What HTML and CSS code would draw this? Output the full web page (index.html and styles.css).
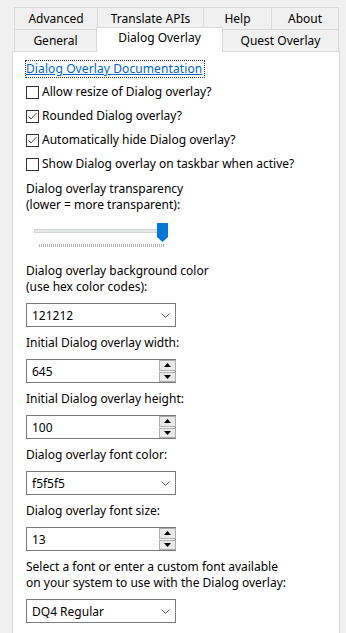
FILE: index.html
```html
<!DOCTYPE html>
<html>
<head>
<meta charset="utf-8">
<link rel="stylesheet" href="styles.css">
</head>
<body>
<div class="tabs">
  <div class="tab-row back">
    <div class="tab t-adv">Advanced</div>
    <div class="tab t-api">Translate APIs</div>
    <div class="tab t-help">Help</div>
    <div class="tab t-about last">About</div>
  </div>
  <div class="tab-row front">
    <div class="tab t-gen">General</div>
    <div class="tab t-dlg active">Dialog Overlay</div>
    <div class="tab t-quest last">Quest Overlay</div>
  </div>
</div>
<div class="panel">
  <div class="link-row"><a class="doc-link">Dialog Overlay Documentation</a></div>
  <div class="checks">
    <div class="check"><span class="box"></span><span>Allow resize of Dialog overlay?</span></div>
    <div class="check"><span class="box"><svg width="13" height="13" viewBox="0 0 13 13"><path d="M2.5 6.5 L5 9 L10.5 3" fill="none" stroke="#555" stroke-width="1"/></svg></span><span>Rounded Dialog overlay?</span></div>
    <div class="check"><span class="box"><svg width="13" height="13" viewBox="0 0 13 13"><path d="M2.5 6.5 L5 9 L10.5 3" fill="none" stroke="#555" stroke-width="1"/></svg></span><span>Automatically hide Dialog overlay?</span></div>
    <div class="check"><span class="box"></span><span>Show Dialog overlay on taskbar when active?</span></div>
  </div>
  <div class="label first">Dialog overlay transparency<br>(lower = more transparent):</div>
  <div class="slider">
    <div class="track"></div>
    <svg class="thumb" width="11" height="19" viewBox="0 0 11 19"><path d="M0 0 H11 V14 L5.5 19 L0 14 Z" fill="#0078d7"/></svg>
    <div class="ticks"></div>
  </div>
  <div class="label after-slider">Dialog overlay background color<br>(use hex color codes):</div>
  <div class="combo"><span>121212</span><svg width="9" height="5" viewBox="0 0 9 5"><path d="M0.5 0.5 L4.5 4.5 L8.5 0.5" fill="none" stroke="#606060"/></svg></div>
  <div class="label">Initial Dialog overlay width:</div>
  <div class="spin"><span class="spin-text">645</span><div class="spin-btns"><div class="sb"><svg width="7" height="4" viewBox="0 0 7 4"><path d="M0 4 L3.5 0 L7 4 Z" fill="#000"/></svg></div><div class="sb"><svg width="7" height="4" viewBox="0 0 7 4"><path d="M0 0 L3.5 4 L7 0 Z" fill="#000"/></svg></div></div></div>
  <div class="label">Initial Dialog overlay height:</div>
  <div class="spin"><span class="spin-text">100</span><div class="spin-btns"><div class="sb"><svg width="7" height="4" viewBox="0 0 7 4"><path d="M0 4 L3.5 0 L7 4 Z" fill="#000"/></svg></div><div class="sb"><svg width="7" height="4" viewBox="0 0 7 4"><path d="M0 0 L3.5 4 L7 0 Z" fill="#000"/></svg></div></div></div>
  <div class="label">Dialog overlay font color:</div>
  <div class="combo"><span>f5f5f5</span><svg width="9" height="5" viewBox="0 0 9 5"><path d="M0.5 0.5 L4.5 4.5 L8.5 0.5" fill="none" stroke="#606060"/></svg></div>
  <div class="label">Dialog overlay font size:</div>
  <div class="spin"><span class="spin-text">13</span><div class="spin-btns"><div class="sb"><svg width="7" height="4" viewBox="0 0 7 4"><path d="M0 4 L3.5 0 L7 4 Z" fill="#000"/></svg></div><div class="sb"><svg width="7" height="4" viewBox="0 0 7 4"><path d="M0 0 L3.5 4 L7 0 Z" fill="#000"/></svg></div></div></div>
  <div class="label">Select a font or enter a custom font available<br>on your system to use with the Dialog overlay:</div>
  <div class="combo"><span>DQ4 Regular</span><svg width="9" height="5" viewBox="0 0 9 5"><path d="M0.5 0.5 L4.5 4.5 L8.5 0.5" fill="none" stroke="#606060"/></svg></div>
</div>
</body>
</html>
```
FILE: styles.css
```css
html, body {
  margin: 0;
  padding: 0;
  background: #f0f0f0;
  overflow: hidden;
}
body {
  font-family: "Noto Sans", "Open Sans", sans-serif;
  font-size: 12px;
  line-height: 16px;
  color: #000;
  width: 346px;
  height: 633px;
}
.tabs {
  margin: 7px 0 0 14px;
  width: 325px;
}
.tab-row {
  display: flex;
  height: 22px;
}
.tab {
  box-sizing: border-box;
  height: 22px;
  border-top: 1px solid #d9d9d9;
  border-left: 1px solid #d9d9d9;
  background: #f0f0f0;
  text-align: center;
  line-height: 21px;
  white-space: nowrap;
}
.tab.last {
  border-right: 1px solid #d9d9d9;
}
.t-adv { width: 83px; }
.t-api { width: 106px; }
.t-help { width: 68px; }
.t-about { width: 68px; }
.t-gen { width: 82px; }
.t-dlg { width: 127px; }
.t-quest { width: 116px; border-left: none; }
.tab.active {
  background: #fff;
  height: 25px;
  margin-top: -2px;
  margin-bottom: -1px;
  border-right: 1px solid #d9d9d9;
  position: relative;
  z-index: 2;
  line-height: 20px;
}
.panel {
  box-sizing: border-box;
  margin-left: 12px;
  width: 328px;
  height: 600px;
  background: #fff;
  border: 1px solid #d9d9d9;
  padding: 8px 13px 0 13px;
  display: flex;
  flex-direction: column;
  align-items: flex-start;
}
.link-row {
  height: 18px;
}
.doc-link {
  display: inline-block;
  color: #0066cc;
  text-decoration: underline;
  border: 1px dotted #333;
  padding: 0 2px 0 0;
  margin-left: -1px;
  line-height: 16px;
  letter-spacing: 0.1px;
  white-space: nowrap;
}
.checks {
  margin-top: 2px;
  display: flex;
  flex-direction: column;
}
.check {
  height: 24px;
  display: flex;
  align-items: center;
  white-space: nowrap;
}
.box {
  box-sizing: border-box;
  width: 13px;
  height: 13px;
  border: 1px solid #333;
  background: #fff;
  margin-right: 3px;
  display: flex;
  align-items: center;
  justify-content: center;
  margin-top: 1px;
}
.box svg {
  display: block;
  flex: none;
}
.label {
  margin-top: 8px;
  white-space: nowrap;
}
.label.first {
  margin-top: 5px;
}
.label.after-slider {
  margin-top: 16px;
}
.slider {
  position: relative;
  margin-top: 10px;
  width: 145px;
  height: 24px;
}
.track {
  position: absolute;
  left: 8px;
  top: 6px;
  width: 133px;
  height: 4px;
  box-sizing: border-box;
  background: #e7eaea;
  border: 1px solid #d6d6d6;
}
.thumb {
  position: absolute;
  left: 131px;
  top: 0;
}
.ticks {
  position: absolute;
  left: 13px;
  top: 20px;
  width: 125px;
  height: 4px;
  background: repeating-linear-gradient(to right, #b8b8b8 0, #b8b8b8 1px, transparent 1px, transparent 2px);
  background-size: 100% 3px;
  background-repeat: no-repeat;
  background-position: 0 1px;
}
.combo, .spin {
  box-sizing: border-box;
  margin-top: 8px;
  width: 150px;
  height: 24px;
  border: 1px solid #7a7a7a;
  background: #fff;
  display: flex;
  align-items: center;
}
.combo {
  justify-content: space-between;
  padding: 0 5px 0 5px;
}
.combo span, .spin-text {
  padding-top: 1px;
}
.spin-text {
  padding-left: 5px;
  flex: 1;
}
.spin-btns {
  align-self: stretch;
  display: flex;
  flex-direction: column;
  justify-content: center;
  gap: 1px;
  width: 17px;
  margin-right: -1px;
}
.sb {
  box-sizing: border-box;
  height: 11px;
  border: 1px solid #adadad;
  background: #e9e9e9;
  display: flex;
  align-items: center;
  justify-content: center;
}
```
